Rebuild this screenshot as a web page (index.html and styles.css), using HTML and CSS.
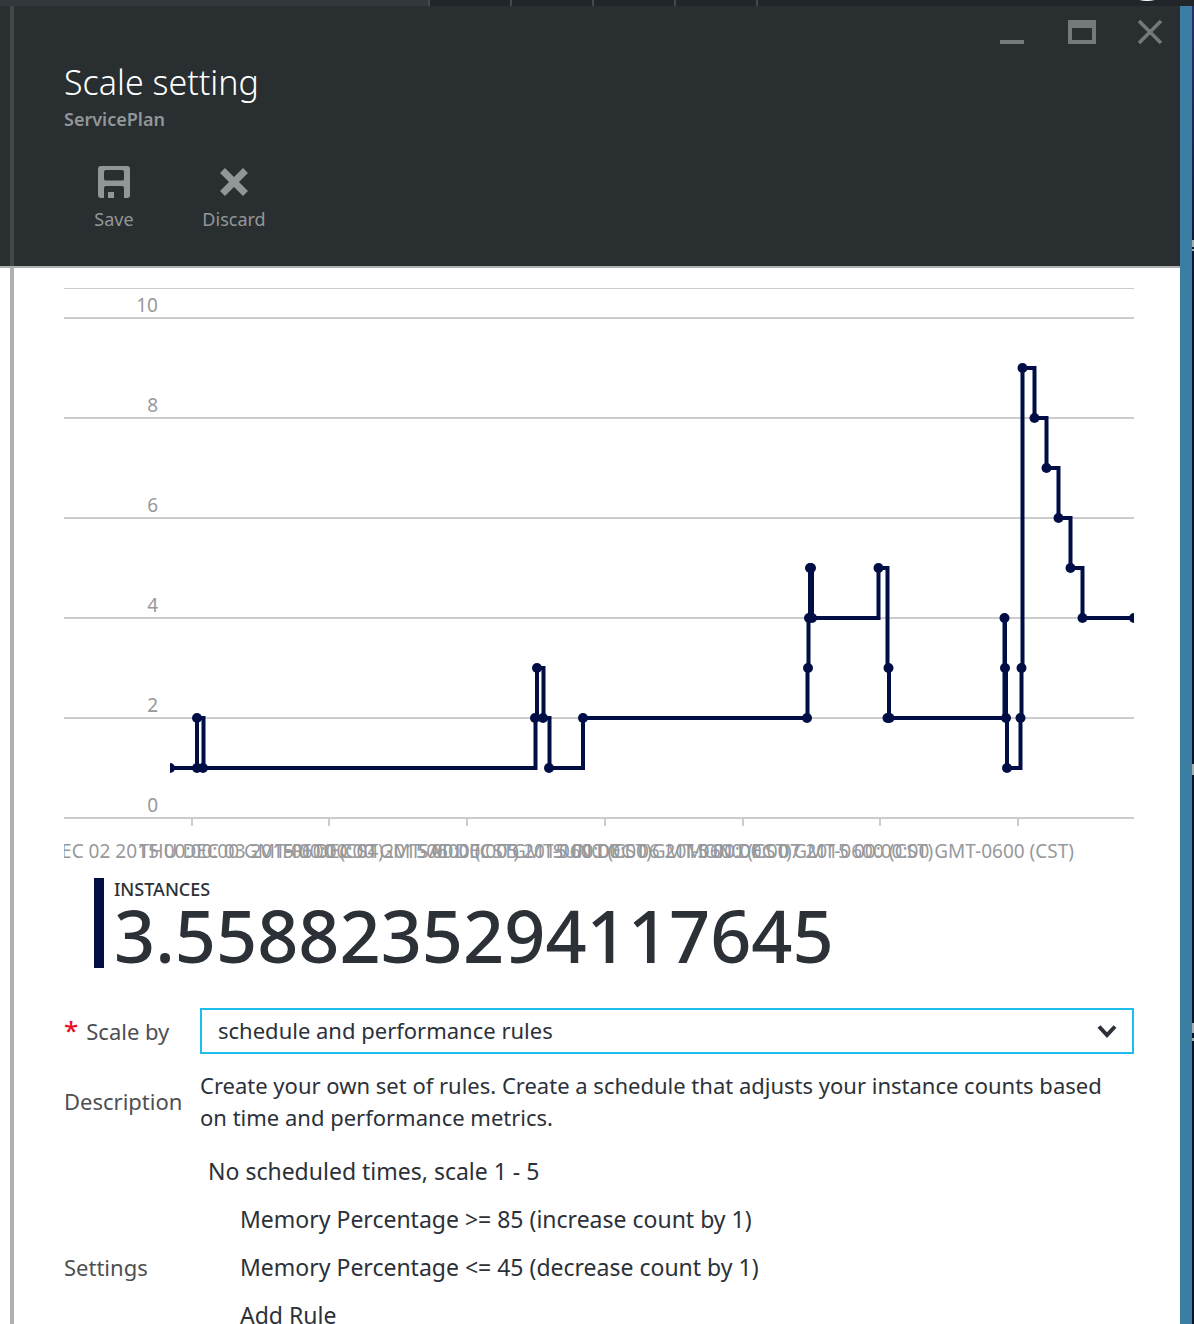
FILE: index.html
```html
<!DOCTYPE html>
<html lang="en">
<head>
<meta charset="utf-8">
<title>Scale setting</title>
<link rel="stylesheet" href="styles.css">
</head>
<body>
<nav class="topbar" aria-label="Portal">
  <span class="topbar-home"></span>
  <span class="topbar-slot"></span>
  <span class="topbar-slot"></span>
  <span class="topbar-slot"></span>
  <span class="topbar-slot"></span>
  <span class="topbar-rest"><span class="avatar"></span></span>
</nav>
<div class="workspace">
  <main class="blade">
    <header class="blade-header">
      <div class="blade-header-inner">
        <div class="window-controls">
          <button type="button" aria-label="Minimize"><svg width="28" height="28" viewBox="0 0 28 28"><path d="M0 22h24v4H0z" fill="currentColor"/></svg></button>
          <button type="button" aria-label="Maximize"><svg width="28" height="28" viewBox="0 0 28 28"><path fill-rule="evenodd" d="M0 2h28v24H0zM4 10v12h20V10z" fill="currentColor"/></svg></button>
          <button type="button" aria-label="Close"><svg width="28" height="28" viewBox="0 0 28 28"><path d="M3 3l22 22M25 3L3 25" stroke="currentColor" stroke-width="3.5" fill="none"/></svg></button>
        </div>
        <h1>Scale setting</h1>
        <p class="subtitle">ServicePlan</p>
        <div class="commands">
          <button type="button" class="command">
            <svg width="32" height="32" viewBox="0 0 32 32"><path fill-rule="evenodd" d="M3 0h26q3 0 3 3v26q0 3-3 3h-3V22q0-2-2-2H8q-2 0-2 2v10H3q-3 0-3-3V3q0-3 3-3zM8 4q-2 0-2 2v7q0 1.500 2 1.500h16q2 0 2-1.500V6q0-2-2-2z" fill="currentColor"/><path d="M10 26h6v6h-6z" fill="currentColor"/></svg>
            Save
          </button>
          <button type="button" class="command">
            <svg width="32" height="32" viewBox="0 0 32 32"><path d="M4.500 4.500l23 23M27.500 4.500l-23 23" stroke="currentColor" stroke-width="7" fill="none"/></svg>
            Discard
          </button>
        </div>
      </div>
    </header>
    <div class="blade-body">
      <svg class="chart" viewBox="64 288 1070 586" role="img" aria-label="Instances over time">
        <defs><clipPath id="plot"><rect x="170" y="288" width="964" height="534"/></clipPath></defs>
        <g class="grid">
          <path class="frame" d="M64 288.500H1134"/>
          <path d="M64 318H1134M64 418H1134M64 518H1134M64 618H1134M64 718H1134M64 818H1134"/>
          <path d="M192 818v8M329 818v8M467 818v8M605 818v8M743 818v8M880 818v8M1018 818v8"/>
        </g>
        <g class="tick-label y-labels">
          <text x="158" y="312">10</text>
          <text x="158" y="412">8</text>
          <text x="158" y="512">6</text>
          <text x="158" y="612">4</text>
          <text x="158" y="712">2</text>
          <text x="158" y="812">0</text>
        </g>
        <g class="tick-label x-labels">
          <text x="192" y="858">WED DEC 02 2015 00:00:00 GMT-0600 (CST)</text>
          <text x="329" y="858">THU DEC 03 2015 00:00:00 GMT-0600 (CST)</text>
          <text x="467" y="858">FRI DEC 04 2015 00:00:00 GMT-0600 (CST)</text>
          <text x="605" y="858">SAT DEC 05 2015 00:00:00 GMT-0600 (CST)</text>
          <text x="743" y="858">SUN DEC 06 2015 00:00:00 GMT-0600 (CST)</text>
          <text x="880" y="858">MON DEC 07 2015 00:00:00 GMT-0600 (CST)</text>
        </g>
        <g class="series" clip-path="url(#plot)">
          <path d="M170 768H197V718H203.500V768H535.500V718H537V668H543.500V718H549.500V768H583V718H807.500V668H808.500V618H810V568H812V618H878.500V568H887.500V668H889V718H1004.500V618H1005V668H1006V718H1007V768H1020.500V718H1021.500V668H1022.500V368H1034.500V418H1046.500V468H1058.500V518H1070.500V568H1082.500V618H1134"/>
          <g class="points">
            <circle cx="170" cy="768" r="5"/><circle cx="197" cy="768" r="5"/><circle cx="197" cy="718" r="5"/><circle cx="203" cy="768" r="5"/>
            <circle cx="535" cy="718" r="5"/><circle cx="537" cy="668" r="5"/><circle cx="543" cy="718" r="5"/><circle cx="549" cy="768" r="5"/>
            <circle cx="583" cy="718" r="5"/><circle cx="807" cy="718" r="5"/><circle cx="808" cy="668" r="5"/><circle cx="809" cy="618" r="5"/>
            <circle cx="810" cy="568" r="5"/><circle cx="811" cy="568" r="5"/><circle cx="812" cy="618" r="5"/><circle cx="878.500" cy="568" r="5"/>
            <circle cx="888.500" cy="668" r="5"/><circle cx="887.500" cy="718" r="5"/><circle cx="889.500" cy="718" r="5"/><circle cx="1004.500" cy="618" r="5"/>
            <circle cx="1005" cy="668" r="5"/><circle cx="1006" cy="718" r="5"/><circle cx="1007" cy="768" r="5"/><circle cx="1020.500" cy="718" r="5"/>
            <circle cx="1021.500" cy="668" r="5"/><circle cx="1022.500" cy="368" r="5"/><circle cx="1034.500" cy="418" r="5"/><circle cx="1046.500" cy="468" r="5"/>
            <circle cx="1058.500" cy="518" r="5"/><circle cx="1070.500" cy="568" r="5"/><circle cx="1082.500" cy="618" r="5"/><circle cx="1134" cy="618" r="5"/>
          </g>
        </g>
      </svg>
      <div class="metric">
        <span class="metric-name">INSTANCES</span>
        <span class="metric-value">3.5588235294117645</span>
      </div>
      <form class="settings-form">
        <div class="field">
          <label class="field-label required" for="scale-by">Scale by</label>
          <div class="select-box">
            <select id="scale-by"><option>schedule and performance rules</option></select>
            <svg class="chevron" width="20" height="14" viewBox="0 0 20 14"><path d="M2 2.500l8 8.500 8-8.500" stroke="currentColor" stroke-width="4" fill="none"/></svg>
          </div>
        </div>
        <div class="field description">
          <span class="field-label">Description</span>
          <p>Create your own set of rules. Create a schedule that adjusts your instance counts based on time and performance metrics.</p>
        </div>
        <div class="field profiles">
          <span class="field-label">Settings</span>
          <ul class="rules">
            <li class="profile"><a href="#">No scheduled times, scale 1 - 5</a></li>
            <li><a href="#">Memory Percentage &gt;= 85 (increase count by 1)</a></li>
            <li><a href="#">Memory Percentage &lt;= 45 (decrease count by 1)</a></li>
            <li><a href="#">Add Rule</a></li>
          </ul>
        </div>
      </form>
    </div>
  </main>
  <div class="selection-edge"></div>
  <div class="backdrop"></div>
</div>
</body>
</html>
```
FILE: styles.css
```css
* { box-sizing: border-box; margin: 0; padding: 0; }

body {
  display: flex;
  flex-direction: column;
  height: 100vh;
  overflow: hidden;
  background: #0c1226;
  color: #2c3138;
  font: 22px/32px "Noto Sans", "Open Sans", sans-serif;
}

button { border: 0; background: none; font: inherit; color: inherit; }
svg { display: block; }

.topbar { display: flex; flex: none; height: 6px; background: #212429; }
.topbar-home { width: 428px; background: #33383c; }
.topbar-slot { width: 82px; border-left: 2px solid #44484c; }
.topbar-rest { flex: 1; border-left: 2px solid #44484c; overflow: hidden; }
.avatar {
  display: block;
  width: 60px;
  height: 60px;
  margin: -59px 17px 0 auto;
  border-radius: 50%;
  background: #fff;
}

.workspace { display: flex; flex: 1; min-height: 0; }
.blade { flex: 1; min-width: 0; background: #fff; overflow: hidden; }
.selection-edge { flex: none; width: 12px; background: #3a7fa3; }
.backdrop {
  flex: none;
  width: 2px;
  background:
    linear-gradient(#aaa, #aaa) 0 234px / 2px 7px no-repeat,
    linear-gradient(#aaa, #aaa) 0 243px / 2px 2px no-repeat,
    linear-gradient(#aaa, #aaa) 0 758px / 2px 11px no-repeat,
    linear-gradient(#aaa, #aaa) 0 1017px / 2px 10px no-repeat,
    linear-gradient(#aaa, #aaa) 0 1032px / 2px 3px no-repeat,
    linear-gradient(#2b3168, #0c1226 300px);
}

.blade-header { padding-left: 10px; background: #292e31; border-bottom: 2px solid #b0b0b0; }
.blade-header-inner { height: 260px; padding: 12px 16px 0 50px; border-left: 4px solid #43474a; }
.window-controls { display: flex; justify-content: flex-end; gap: 40px; height: 44px; color: #75797b; }
.window-controls button { width: 28px; height: 28px; }
h1 { color: #fff; font-size: 34px; line-height: 40px; font-weight: 300; }
.subtitle { color: #939698; font-size: 18px; line-height: 24px; font-weight: 600; margin-top: 5px; }
.commands { display: flex; gap: 20px; margin-top: 35px; color: #939698; font-size: 18px; line-height: 24px; }
.command { display: flex; flex-direction: column; align-items: center; gap: 9px; width: 100px; }

.blade-body {
  min-height: 100%;
  margin-left: 10px;
  padding: 20px 46px 0 50px;
  border-left: 4px solid #b0b0b0;
}

.chart { width: 100%; height: auto; overflow: hidden; }
.grid { stroke: #ccc; stroke-width: 2px; fill: none; }
.grid .frame { stroke-width: 1px; }
.tick-label { font-size: 19px; fill: #97999c; }
.y-labels { text-anchor: end; }
.x-labels { text-anchor: middle; }
.series { stroke: #000e45; stroke-width: 4px; fill: none; }
.points { stroke: none; fill: #000e45; }

.metric {
  display: flex;
  flex-direction: column;
  height: 90px;
  margin: 4px 0 0 30px;
  padding-left: 10px;
  border-left: 10px solid #000e45;
}
.metric-name { font-size: 18px; line-height: 22px; font-weight: 500; }
.metric-value { font-size: 72px; line-height: 70px; font-weight: 500; }

.settings-form { margin-top: 40px; }
.field { display: flex; align-items: center; }
.field-label { flex: none; width: 136px; color: #4d4f52; }
.required { display: flex; gap: 8px; }
.required::before { content: "*"; color: #e81123; font-size: 26px; line-height: 30px; font-weight: 500; }
.select-box { display: grid; flex: 1; align-items: center; }
.select-box > * { grid-area: 1 / 1; }
select {
  appearance: none;
  width: 100%;
  height: 46px;
  padding: 0 48px 2px 16px;
  border: 2px solid #1fbdec;
  border-radius: 0;
  background: #fff;
  color: inherit;
  font: inherit;
}
.chevron { justify-self: end; margin-right: 17px; pointer-events: none; }
.description { margin-top: 15px; }
.profiles { margin-top: 14px; }
.rules { list-style: none; padding-bottom: 48px; font-size: 23px; line-height: 48px; }
.rules li { padding-left: 40px; }
.rules .profile { padding-left: 8px; }
.rules a { color: inherit; text-decoration: none; }
```
